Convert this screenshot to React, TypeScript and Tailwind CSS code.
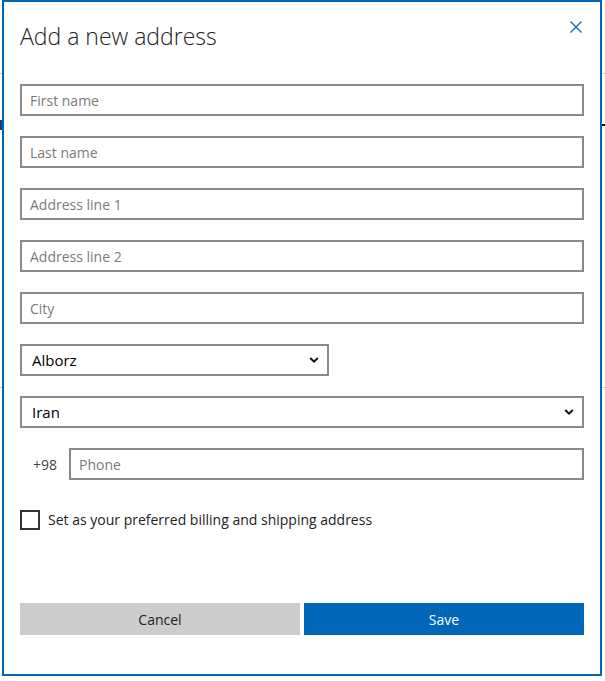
const fields = ["First name", "Last name", "Address line 1", "Address line 2", "City"];

const Chevron = () => (
  <svg
    className="pointer-events-none absolute right-[10px] top-1/2 -translate-y-1/2"
    width="10"
    height="7"
    viewBox="0 0 10 7"
    fill="none"
  >
    <path d="M1.2 1.5 L5 5.2 L8.8 1.5" stroke="#111" strokeWidth="2" />
  </svg>
);

export default function App() {
  return (
    <div className="relative h-[681px] w-[605px] overflow-hidden bg-white font-['Open_Sans','Noto_Sans',sans-serif]">
      {/* page behind the dialog */}
      <div className="absolute left-0 top-[73px] h-px w-full bg-[#c8c8c8]" />
      <div className="absolute left-0 top-[120px] h-[10px] w-[2px] bg-[#1b3c8c]" />
      <div className="absolute right-0 top-[124px] h-[2px] w-[3px] bg-[#111]" />
      <div className="absolute left-0 top-[387px] h-px w-full bg-[#c8c8c8]" />

      {/* dialog */}
      <div className="absolute left-[2px] top-0 flex h-[676px] w-[600px] flex-col border-2 border-[#0067b8] bg-white px-4 pt-[18px]">
        <div className="flex items-start justify-between">
          <h1 className="text-[23px] font-light leading-8 text-[#222]">Add a new address</h1>
          <button className="mr-[2px] mt-px" aria-label="Close">
            <svg width="12" height="12" viewBox="0 0 12 12" fill="none">
              <path d="M0.5 0.5 L11.5 11.5 M11.5 0.5 L0.5 11.5" stroke="#0067b8" strokeWidth="1.2" />
            </svg>
          </button>
        </div>

        <div className="mt-8 flex flex-col gap-5">
          {fields.map((f) => (
            <input
              key={f}
              placeholder={f}
              className="h-8 w-full border-2 border-[#8a8a8a] px-2 text-[14px] text-[#222] outline-none placeholder:text-[#7a7a7a]"
            />
          ))}

          <div className="relative w-[309px]">
            <select className="h-8 w-full appearance-none border-2 border-[#8a8a8a] bg-white pl-[10px] text-[15px] text-black outline-none">
              <option>Alborz</option>
            </select>
            <Chevron />
          </div>

          <div className="relative w-full">
            <select className="h-8 w-full appearance-none border-2 border-[#8a8a8a] bg-white pl-[10px] text-[15px] text-black outline-none">
              <option>Iran</option>
            </select>
            <Chevron />
          </div>

          <div className="flex items-center">
            <span className="w-[49px] pl-[13px] text-[14px] text-[#444]">+98</span>
            <input
              placeholder="Phone"
              className="h-8 flex-1 border-2 border-[#8a8a8a] px-2 text-[14px] text-[#222] outline-none placeholder:text-[#7a7a7a]"
            />
          </div>
        </div>

        <label className="mt-[30px] flex h-5 items-center gap-2">
          <span className="h-5 w-5 border-2 border-[#333]" />
          <span className="text-[14px] leading-5 text-[#222]">Set as your preferred billing and shipping address</span>
        </label>

        <div className="mt-[73px] grid grid-cols-2 gap-1">
          <button className="h-8 bg-[#cccccc] text-[14px] text-[#222]">Cancel</button>
          <button className="h-8 bg-[#0067b8] text-[14px] text-white">Save</button>
        </div>
      </div>
    </div>
  );
}
